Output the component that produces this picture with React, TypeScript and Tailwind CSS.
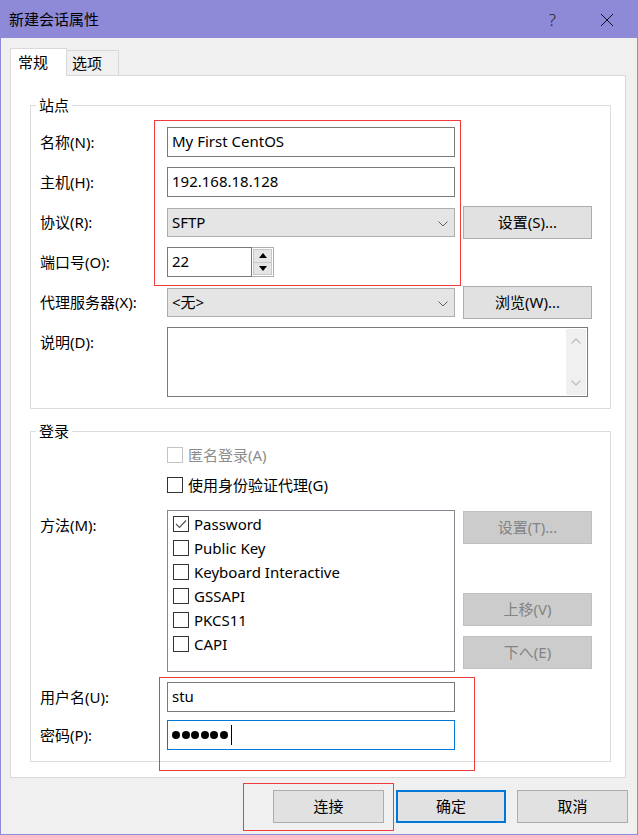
import type { ReactNode } from 'react'

const font = "font-['Noto_Sans','Noto_Sans_CJK_SC',sans-serif]"

function Btn({ children, disabled, className = 'w-[129px]' }: { children: ReactNode; disabled?: boolean; className?: string }) {
  return (
    <div
      className={`flex h-[33px] shrink-0 items-center justify-center text-[15px] ${
        disabled ? 'border border-[#bfbfbf] bg-[#cccccc] text-[#838383]' : 'bg-[#e1e1e1] text-black'
      } ${className}`}
    >
      {children}
    </div>
  )
}

function Box({ checked, disabled }: { checked?: boolean; disabled?: boolean }) {
  return (
    <span
      className={`flex h-[16px] w-[16px] shrink-0 items-center justify-center border bg-white ${
        disabled ? 'border-[#c4c4c4]' : 'border-[#333333]'
      }`}
    >
      {checked && (
        <svg width="12" height="10" viewBox="0 0 12 10">
          <path d="M1 5 L4.5 8.5 L11 1.5" fill="none" stroke="#555555" strokeWidth="1.2" />
        </svg>
      )}
    </span>
  )
}

function Chevron() {
  return (
    <svg width="10" height="6" viewBox="0 0 10 6" className="absolute right-[6px] top-[12px]">
      <path d="M0.5 0.5 L5 5 L9.5 0.5" fill="none" stroke="#606060" strokeWidth="1" />
    </svg>
  )
}

function Label({ children }: { children: ReactNode }) {
  return <span className="w-[127px] shrink-0 text-[15px]">{children}</span>
}

function TextBox({ children, focused }: { children?: ReactNode; focused?: boolean }) {
  return (
    <div
      className={`flex h-[30px] w-[288px] items-center border bg-white pb-px pl-[4px] text-[15px] ${
        focused ? 'border-[#0078d7]' : 'border-[#7a7a7a]'
      }`}
    >
      {children}
    </div>
  )
}

const methods = [
  { name: 'Password', checked: true },
  { name: 'Public Key' },
  { name: 'Keyboard Interactive' },
  { name: 'GSSAPI' },
  { name: 'PKCS11' },
  { name: 'CAPI' },
]

export default function App() {
  return (
    <div className={`relative flex h-[835px] w-[638px] flex-col border border-[#8e8ad8] bg-[#f0f0f0] text-black ${font}`}>
      {/* title bar */}
      <div className="flex h-[37px] shrink-0 items-center bg-[#8e8ad8] pl-[8px]">
        <span className="text-[15px]">新建会话属性</span>
        <span className="ml-auto mr-[44px] text-[17px] font-light text-[#222]">?</span>
        <svg width="14" height="14" viewBox="0 0 14 14" className="mr-[23px]">
          <path d="M1 1 L13 13 M13 1 L1 13" stroke="#111" strokeWidth="1" />
        </svg>
      </div>

      {/* tabs */}
      <div className="ml-[9px] mt-[10px] flex items-start">
        <div className="relative z-10 -mb-px flex h-[28px] w-[57px] items-center border border-b-0 border-[#d9d9d9] bg-white pl-[7px] text-[15px]">
          常规
        </div>
        <div className="mt-[2px] flex h-[25px] w-[52px] items-center border border-b-0 border-l-0 border-[#d9d9d9] pl-[5px] text-[15px]">
          选项
        </div>
      </div>

      {/* tab panel */}
      <div className="ml-[9px] w-[616px] border border-[#d9d9d9] bg-white pb-[15px]">
        <fieldset className="ml-[19px] mt-[19px] w-[581px] border border-[#dcdcdc] pb-[11px]">
          <legend className="ml-[5px] px-[3px] text-[15px] leading-[20px]">站点</legend>
          <div className="pl-[9px]">
            <div className="mt-[12px] flex h-[30px] items-center">
              <Label>名称(N):</Label>
              <TextBox>My First CentOS</TextBox>
            </div>
            <div className="mt-[10px] flex h-[30px] items-center">
              <Label>主机(H):</Label>
              <TextBox>192.168.18.128</TextBox>
            </div>
            <div className="mt-[9px] flex h-[33px] items-center">
              <Label>协议(R):</Label>
              <div className="relative flex h-[29px] w-[288px] items-center border border-[#adadad] bg-[#e5e5e5] pb-px pl-[4px] text-[15px]">
                SFTP
                <Chevron />
              </div>
              <Btn className="ml-[8px] w-[129px] border border-[#adadad]">设置(S)...</Btn>
            </div>
            <div className="mt-[8px] flex h-[30px] items-center">
              <Label>端口号(O):</Label>
              <div className="flex h-[30px] w-[85px] items-center border border-[#7a7a7a] bg-white pb-px pl-[4px] text-[15px]">22</div>
              <div className="flex h-[30px] w-[22px] flex-col border border-l-0 border-[#adadad] bg-white p-px">
                <div className="flex flex-1 items-center justify-center border border-[#c8c8c8] bg-[#e5e5e5]">
                  <svg width="8" height="5" viewBox="0 0 8 5"><path d="M0 5 L4 0 L8 5 Z" fill="#000" /></svg>
                </div>
                <div className="flex flex-1 items-center justify-center border border-t-0 border-[#c8c8c8] bg-[#e5e5e5]">
                  <svg width="8" height="5" viewBox="0 0 8 5"><path d="M0 0 L4 5 L8 0 Z" fill="#000" /></svg>
                </div>
              </div>
            </div>
            <div className="mt-[9px] flex h-[33px] items-center">
              <Label>代理服务器(X):</Label>
              <div className="relative flex h-[29px] w-[288px] items-center border border-[#adadad] bg-[#e5e5e5] pb-px pl-[4px] text-[15px]">
                &lt;无&gt;
                <Chevron />
              </div>
              <Btn className="ml-[8px] w-[129px] border border-[#adadad]">浏览(W)...</Btn>
            </div>
            <div className="mt-[8px] flex items-start">
              <span className="flex h-[30px] w-[127px] items-center text-[15px]">说明(D):</span>
              <div className="flex h-[70px] w-[421px] justify-end border border-[#7a7a7a] bg-white p-px">
                <div className="flex w-[20px] flex-col items-center justify-between bg-[#f0f0f0] py-[9px]">
                  <svg width="10" height="6" viewBox="0 0 10 6"><path d="M0.5 5.5 L5 1 L9.5 5.5" fill="none" stroke="#c0c0c0" strokeWidth="1.4" /></svg>
                  <svg width="10" height="6" viewBox="0 0 10 6"><path d="M0.5 0.5 L5 5 L9.5 0.5" fill="none" stroke="#c0c0c0" strokeWidth="1.4" /></svg>
                </div>
              </div>
            </div>
          </div>
        </fieldset>

        <fieldset className="ml-[19px] mt-[12px] w-[581px] border border-[#dcdcdc] pb-[11px]">
          <legend className="ml-[5px] px-[3px] text-[15px] leading-[20px]">登录</legend>
          <div className="pl-[9px]">
            <div className="ml-[127px] mt-[3px] flex h-[22px] items-center gap-[5px] text-[15px] text-[#8c8c8c]">
              <Box disabled />
              匿名登录(A)
            </div>
            <div className="ml-[127px] mt-[8px] flex h-[22px] items-center gap-[5px] text-[15px]">
              <Box />
              使用身份验证代理(G)
            </div>
            <div className="mt-[14px] flex items-start">
              <span className="flex h-[30px] w-[127px] items-center text-[15px]">方法(M):</span>
              <div className="h-[162px] w-[288px] border border-[#828790] bg-white pl-[5px] pt-px">
                {methods.map((m) => (
                  <div key={m.name} className="flex h-[24px] items-center gap-[5px] text-[15px]">
                    <Box checked={m.checked} />
                    {m.name}
                  </div>
                ))}
              </div>
              <div className="ml-[8px] flex flex-col">
                <Btn disabled className="mt-px w-[129px]">设置(T)...</Btn>
                <Btn disabled className="mt-[49px] w-[129px]">上移(V)</Btn>
                <Btn disabled className="mt-[10px] w-[129px]">下へ(E)</Btn>
              </div>
            </div>
            <div className="mt-[10px] flex h-[30px] items-center">
              <Label>用户名(U):</Label>
              <TextBox>stu</TextBox>
            </div>
            <div className="mt-[8px] flex h-[30px] items-center">
              <Label>密码(P):</Label>
              <TextBox focused>
                <span className="flex items-center gap-[1.5px]">
                  {[0, 1, 2, 3, 4, 5].map((i) => (
                    <span key={i} className="h-[8px] w-[8px] rounded-full bg-black" />
                  ))}
                </span>
                <span className="ml-[3px] h-[20px] w-px bg-black" />
              </TextBox>
            </div>
          </div>
        </fieldset>
      </div>

      {/* footer buttons */}
      <div className="mt-[12px] flex">
        <Btn className="ml-[272px] w-[111px] border border-[#adadad]">连接</Btn>
        <Btn className="ml-[12px] w-[110px] border-2 border-[#0078d7]">确定</Btn>
        <Btn className="ml-[11px] w-[111px] border border-[#adadad]">取消</Btn>
      </div>

      {/* red annotation boxes */}
      <div className="pointer-events-none absolute left-[153px] top-[119px] h-[166px] w-[307px] border border-[#f03c3c]" />
      <div className="pointer-events-none absolute left-[158px] top-[676px] h-[94px] w-[316px] border border-[#f03c3c]" />
      <div className="pointer-events-none absolute left-[242px] top-[782px] h-[48px] w-[151px] border border-[#f03c3c]" />
    </div>
  )
}
